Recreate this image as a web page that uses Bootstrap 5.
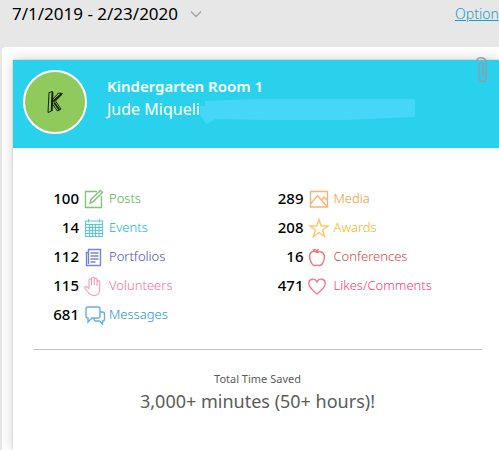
<!DOCTYPE html>
<html lang="en">
<head>
<meta charset="utf-8">
<meta name="viewport" content="width=device-width, initial-scale=1">
<title>Classroom summary</title>
<link rel="stylesheet" href="https://cdn.jsdelivr.net/npm/bootstrap@5.3.0/dist/css/bootstrap.min.css">
<style>
  body { background: #e7e7e7; font-family: "Noto Sans", "Open Sans", sans-serif; color: #000; overflow-x: hidden; }
  .topbar { height: 47px; padding: 0 0 20px 12px; }
  .range-btn { font-size: 17px; line-height: 24px; color: #000; gap: 12px; }
  .options-link { font-size: 14px; line-height: 20px; color: #1a9cc9; width: 44px; font-weight: 300; }
  .panel { margin-left: 2px; padding: 13px 0 0 11px; border-radius: 4px 0 0 0; background: #fff; min-height: calc(100vh - 47px); }
  .summary { min-height: calc(100vh - 60px); box-shadow: 0 0 12px rgba(0,0,0,.2), 0 0 1px rgba(0,0,0,.35); background: #fff; }
  .banner { background: #29d1ec; padding: 10px 0 14px 10px; gap: 20px; color: #fff; line-height: 23px; }
  .avatar { width: 64px; height: 64px; border: 2px solid #fff; background: #90c95c; }
  .names { padding-top: 5px; }
  .room { font-size: 15px; }
  .teacher { font-size: 16px; }
  .redaction { position: absolute; left: 89px; top: 0; }
  .clip { position: absolute; top: -4px; right: 10px; }
  .content { padding: 36px 17px 0 20px; }
  .stat { height: 29px; line-height: 29px; }
  .stat-num { width: 46px; font-size: 15px; font-weight: 500; text-align: right; }
  .stat-icon { width: 24px; height: 24px; margin: 0 3px; fill: none; stroke: currentColor; stroke-width: 1.4; opacity: .7; }
  .stat-label { font-size: 13px; font-weight: 300; }
  .green { color: #4caf3c; } .teal { color: #12b5c9; } .indigo { color: #4350b8; }
  .pink { color: #fa6f9b; } .blue { color: #2490d0; } .orange { color: #fb9336; }
  .gold { color: #fbb02c; } .red { color: #e23f42; } .rose { color: #f2406f; }
  .rule { border-top: 1px solid #c4c4c4; opacity: 1; margin: 20px 0; }
  .saved { color: #5b5b5b; }
  .saved-title { font-size: 11px; line-height: 18px; }
  .saved-value { font-size: 18px; line-height: 26px; }
</style>
<script src="https://cdn.jsdelivr.net/npm/bootstrap@5.3.0/dist/js/bootstrap.bundle.min.js"></script>
</head>
<body>
<header class="topbar d-flex align-items-center justify-content-between">
  <button type="button" class="range-btn btn p-0 border-0 d-flex align-items-center">7/1/2019 - 2/23/2020
    <svg width="12" height="8" viewBox="0 0 12 8" fill="none" stroke="#a3a3a3" stroke-width="1.3" aria-hidden="true"><path d="M1 1.5 6 6.5 11 1.5"/></svg>
  </button>
  <a href="#" class="options-link text-nowrap overflow-hidden">Options</a>
</header>
<main class="panel">
  <section class="summary">
    <div class="banner d-flex align-items-start position-relative">
      <div class="avatar rounded-circle d-flex align-items-center justify-content-center flex-shrink-0">
        <svg width="18" height="24" viewBox="0 0 18 24" fill="none" stroke="#18230f" stroke-linejoin="round" aria-label="K" role="img">
          <path d="M3 2.5 6.5 1.5 5.5 21 2 22.5Z" stroke-width="1"/><path d="M6 10 12.5 3 16.5 3.5 9.5 11 15 19 11.5 21 6 13.5" stroke-width="1"/><path d="M6.5 2 5.7 21M7 11.5 15.5 4M8 12.5 13.5 20" stroke-width="1.9"/>
        </svg>
      </div>
      <div class="names text-nowrap">
        <div class="room fw-semibold">Kindergarten Room 1</div>
        <div class="teacher position-relative">Jude Miqueli
          <svg class="redaction" width="220" height="27" viewBox="0 0 220 27" aria-hidden="true"><path d="M4 8H9V3L60 1H219V19L150 22H70L20 21 10 26 4 17Z" fill="#45d6f8"/></svg>
        </div>
      </div>
      <svg class="clip" width="14" height="28" viewBox="0 0 14 28" fill="none" stroke="#9a9a9a" stroke-width="1.4" stroke-linecap="round" aria-hidden="true"><path d="M2 3.5C4 1 11 1 11.2 6V21.5C11 27 4 27 4 21.5V9.5C4 6.5 8.3 6.5 8.3 9.5V20"/></svg>
    </div>
    <div class="content">
      <div class="row g-0">
        <ul class="col-6 list-unstyled mb-0">
          <li class="stat d-flex align-items-center"><span class="stat-num">100</span><svg class="stat-icon green" viewBox="0 0 24 24"><path d="M15 4.5H3.5V20.5H19.5V9"/><path d="M8 16 9 12.5 18.5 3.5 20.5 5.5 11 14.8Z"/></svg><span class="stat-label green">Posts</span></li>
          <li class="stat d-flex align-items-center"><span class="stat-num">14</span><svg class="stat-icon teal" viewBox="0 0 24 24"><path stroke-width="1.1" d="M3.5 5H20.5V20.5H3.5ZM3.5 8.5H20.5M3.5 11.5H20.5M3.5 14.5H20.5M3.5 17.5H20.5M7.5 8V20.5M10.5 8V20.5M13.5 8V20.5M17 8V20.5M6.5 3V6.5M17.5 3V6.5"/></svg><span class="stat-label teal">Events</span></li>
          <li class="stat d-flex align-items-center"><span class="stat-num">112</span><svg class="stat-icon indigo" viewBox="0 0 24 24"><path d="M6.5 4.5H18.5V20.5H4.5V7.5H6.5ZM6.5 7V19M8.5 8H16.5M8.5 11H16.5M8.5 14H16.5M8.5 17H13.5"/></svg><span class="stat-label indigo">Portfolios</span></li>
          <li class="stat d-flex align-items-center"><span class="stat-num">115</span><svg class="stat-icon pink" viewBox="0 0 24 24"><path stroke-width="1.1" d="M7 14V6.5C7 4.5 9.5 4.5 9.5 6.5V11 4.8C9.5 2.8 12.3 2.8 12.3 4.8V11 5.5C12.3 3.6 15 3.6 15 5.5V12 8C15 6.2 17.7 6.2 17.7 8V15C17.7 19 15.5 21.5 12 21.5C8.5 21.5 7 19.5 5.5 17.5L3 14.5C2 13 3.8 11.8 5 13L7 15"/></svg><span class="stat-label pink">Volunteers</span></li>
          <li class="stat d-flex align-items-center"><span class="stat-num">681</span><svg class="stat-icon blue" viewBox="0 0 24 24"><path d="M6 4H16Q18 4 18 6V13Q18 15 16 15H10L6 19V15Q4 15 4 13V6Q4 4 6 4ZM18 9H20.5Q22.5 9 22.5 11V16Q22.5 18 20.5 18V21L17.5 18H13.5Q12 18 12 15"/></svg><span class="stat-label blue">Messages</span></li>
        </ul>
        <ul class="col-6 list-unstyled mb-0">
          <li class="stat d-flex align-items-center"><span class="stat-num">289</span><svg class="stat-icon orange" viewBox="0 0 24 24"><path d="M3.5 4.5H20.5V20H3.5ZM3.5 17 10.5 8.5 19.5 19M14.5 13 17 10 20.5 13.5"/></svg><span class="stat-label orange">Media</span></li>
          <li class="stat d-flex align-items-center"><span class="stat-num">208</span><svg class="stat-icon gold" viewBox="0 0 24 24"><path d="M12 3.5 14.2 10H21L15.5 14 17.5 20.5 12 16.5 6.5 20.5 8.5 14 3 10H9.8Z"/></svg><span class="stat-label gold">Awards</span></li>
          <li class="stat d-flex align-items-center"><span class="stat-num">16</span><svg class="stat-icon red" viewBox="0 0 24 24"><path d="M10 7.5C5 4.5 1.5 8.5 2.8 13.5C3.8 18 6 21 8 20.5C9.5 20 10.5 20 12 20.5C14.5 21 17 17 17.3 13.5C18 9 15 5 10 7.5ZM10 8C10 6 11 5 11.5 4M10 7C7.5 7 7 5.5 6.5 5C9 4 10 5.5 10 7"/></svg><span class="stat-label red">Conferences</span></li>
          <li class="stat d-flex align-items-center"><span class="stat-num">471</span><svg class="stat-icon rose" viewBox="0 0 24 24"><path d="M10 20C6 16.5 1.8 13.5 1.8 9.5C1.8 4.5 8 3.5 10 8C12 3.5 18.3 4.5 18.3 9.5C18.3 13.5 14 16.5 10 20Z"/></svg><span class="stat-label rose">Likes/Comments</span></li>
        </ul>
      </div>
      <hr class="rule">
      <div class="saved text-center">
        <div class="saved-title">Total Time Saved</div>
        <div class="saved-value">3,000+ minutes (50+ hours)!</div>
      </div>
    </div>
  </section>
</main>
</body>
</html>
